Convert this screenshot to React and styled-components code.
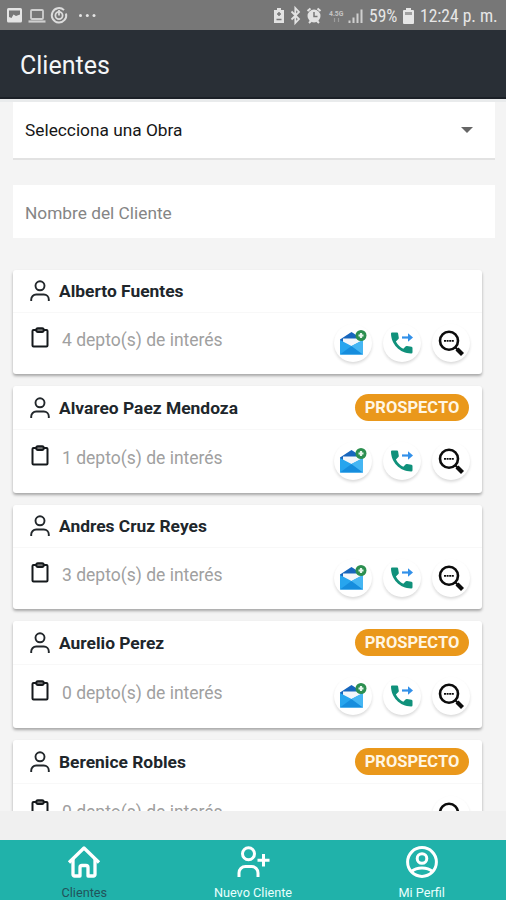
// src/App.jsx
import React, { useState } from "react";
import styled, { createGlobalStyle } from "styled-components";

const clients = [
  { name: "Alberto Fuentes", interests: 4, prospect: false },
  { name: "Alvareo Paez Mendoza", interests: 1, prospect: true },
  { name: "Andres Cruz Reyes", interests: 3, prospect: false },
  { name: "Aurelio Perez", interests: 0, prospect: true },
  { name: "Berenice Robles", interests: 0, prospect: true, onlyDetail: true },
];

const StatusIcons = () => (
  <svg width="100" height="30" viewBox="0 0 100 30" fill="none">
    <rect x="7" y="8" width="15" height="14.500" rx="1.500" fill="#e4e4e4" />
    <path d="M9 10.500h11v4l-4 1.500 -2.500 -1.500 -2 3.500 -2.500 -1z" fill="#777" />
    <rect x="31" y="10" width="12" height="9" rx="1" stroke="#cfcfcf" strokeWidth="1.800" />
    <path d="M28.500 21.500h17" stroke="#cfcfcf" strokeWidth="2.200" />
    <path d="M66 13.500a7.200 7.200 0 1 1-2-3.400" stroke="#dcdcdc" strokeWidth="2" />
    <circle cx="59" cy="15.500" r="3.600" stroke="#dcdcdc" strokeWidth="1.800" />
    <path d="M59 10v5.500" stroke="#dcdcdc" strokeWidth="1.800" />
    <g fill="#e4e4e4">
      <circle cx="80.500" cy="15.500" r="1.500" />
      <circle cx="87.300" cy="15.500" r="1.500" />
      <circle cx="94" cy="15.500" r="1.500" />
    </g>
  </svg>
);

const SignalIcons = () => (
  <svg width="94" height="30" viewBox="272 0 94 30" fill="none">
    <path d="M277 8h4v2h3v13h-10V10h3z" fill="#e2e2e2" />
    <path d="M279 12v4M277 14h4M276.500 19.500h5" stroke="#777" strokeWidth="1.500" />
    <path d="M291.500 11.500l7.500 7.500 -3.700 4V8l3.700 4 -7.500 7.500" stroke="#e2e2e2" strokeWidth="1.800" />
    <circle cx="314" cy="16" r="6.500" fill="#e2e2e2" />
    <path d="M307.500 11l3-2.500M320.500 11l-3-2.500M309 23l2-2M319 23l-2-2" stroke="#e2e2e2" strokeWidth="2" />
    <path d="M314 12v4.500h3.500" stroke="#777" strokeWidth="1.500" />
    <text x="329" y="15.500" fontSize="6.800" fontWeight="700" fill="#c4c4c4" fontFamily="Roboto, sans-serif">4.5G</text>
    <path d="M334.500 18v4M338.500 22v-4" stroke="#9d9d9d" strokeWidth="1.200" />
    <path d="M349.500 20.500v2.500M353.500 17.500v5.500M357.500 13.500v9.500M361.500 9.500v13.500" stroke="#cfcfcf" strokeWidth="2" />
  </svg>
);

const BatteryIcon = () => (
  <svg width="11" height="16" viewBox="0 0 11 16">
    <path d="M3 0h5v2h2a1 1 0 0 1 1 1v12a1 1 0 0 1-1 1H1a1 1 0 0 1-1-1V3a1 1 0 0 1 1-1h2z" fill="#e6e6e6" />
    <path d="M2 4h7v3H2z" fill="#a0a0a0" />
  </svg>
);

const UserIcon = () => (
  <svg width="20" height="22" viewBox="0 0 20 22" fill="none" stroke="#22272b" strokeWidth="1.900">
    <circle cx="10" cy="5.800" r="4.500" />
    <path d="M1.200 21v-1.500a5 5 0 0 1 5-5h7.600a5 5 0 0 1 5 5V21" />
  </svg>
);

const ClipboardIcon = () => (
  <svg width="18" height="21" viewBox="0 0 18 21" fill="none" stroke="#15191c" strokeWidth="2">
    <rect x="1.500" y="3" width="15" height="16.500" rx="1" />
    <path d="M5.300 2.800v.600a1.500 1.500 0 0 0 1.500 1.500h4.400a1.500 1.500 0 0 0 1.500-1.500V2.800a1.500 1.500 0 0 0-1.500-1.500H6.800a1.500 1.500 0 0 0-1.500 1.500z" fill="#777" />
  </svg>
);

const MailIcon = () => (
  <svg width="28" height="26" viewBox="0 0 28 26">
    <path d="M1 9.500L12.500 2 24 9.500V15H1z" fill="#1766bd" />
    <path d="M4 8.500h18v8l-9.500 3L4 16z" fill="#f3f6fa" />
    <path d="M1 10l11.500 6L24 10v14.500H1z" fill="#27a5ee" />
    <path d="M1 24.500l11.500-8.500L24 24.500z" fill="#168ddd" />
    <path d="M24 10v14.500L12.500 16z" fill="#45b6f3" />
    <circle cx="22" cy="5.500" r="5.500" fill="#2c8f50" />
    <path d="M22 3v5M19.500 5.500h5" stroke="#e6f5eb" strokeWidth="2.200" />
  </svg>
);

const CallIcon = () => (
  <svg width="24" height="24" viewBox="0 0 24 24">
    <path
      d="M2 1.500h5q1 0 1.100 1l.7 4.300q.1.700-.4 1.200L5.900 10.500q2.600 5 7.400 7.300l2.500-2.500q.5-.5 1.200-.4l4.500.8q1 .2 1 1.200v4.300q0 1.300-1.300 1.300C9.500 22.500 1.100 13 1 2.600Q1 1.500 2 1.500z"
      fill="#10917b"
    />
    <path d="M12 6.500h8" stroke="#3290e9" strokeWidth="2.200" />
    <path d="M18 2.200l5 4.300-5 4.300z" fill="#3290e9" />
  </svg>
);

const DetailIcon = () => (
  <svg width="26" height="26" viewBox="0 0 26 26" fill="none" stroke="#0c0c0c">
    <circle cx="11" cy="10.800" r="9" strokeWidth="2.600" />
    <path d="M6 10.800h10" strokeWidth="1.800" strokeDasharray="2 .6" />
    <path d="M17.500 17.500l2 2" strokeWidth="2" />
    <path d="M19 19l5.500 5.500" strokeWidth="4.200" />
  </svg>
);

const HomeIcon = () => (
  <svg width="34" height="34" viewBox="0 0 34 34" fill="none" stroke="#fff" strokeWidth="3.300" strokeLinejoin="round">
    <path d="M2 17.500L17 3l15 14.500" />
    <path d="M6 14v15.500a1.500 1.500 0 0 0 1.500 1.500H13v-8.500a2 2 0 0 1 2-2h4a2 2 0 0 1 2 2V31h5.500a1.500 1.500 0 0 0 1.500-1.500V14" />
  </svg>
);

const AddUserIcon = () => (
  <svg width="34" height="34" viewBox="0 0 34 34" fill="none" stroke="#fff" strokeWidth="3">
    <circle cx="12.500" cy="8.800" r="6" />
    <path d="M3 32v-4a6.500 6.500 0 0 1 6.500-6.500h6a6.500 6.500 0 0 1 6.500 6.500v4M27.500 9v12.500M21.500 15.300h12" />
  </svg>
);

const ProfileIcon = () => (
  <svg width="34" height="34" viewBox="0 0 34 34" fill="none" stroke="#fff" strokeWidth="3">
    <circle cx="17" cy="17" r="14.400" />
    <circle cx="17" cy="13.500" r="4.800" />
    <path d="M6.500 26.500q4-3.500 10.500-3.500t10.500 3.500" />
  </svg>
);

const tabs = [
  { label: "Clientes", icon: <HomeIcon /> },
  { label: "Nuevo Cliente", icon: <AddUserIcon /> },
  { label: "Mi Perfil", icon: <ProfileIcon /> },
];

const ClientCard = ({ client }) => (
  <Card>
    <CardHeader $tall={client.prospect}>
      <IconSlot>
        <UserIcon />
      </IconSlot>
      <ClientName>{client.name}</ClientName>
      {client.prospect && <Badge>PROSPECTO</Badge>}
    </CardHeader>
    <CardBody $tall={client.prospect}>
      <IconSlot>
        <ClipboardIcon />
      </IconSlot>
      <Interest>{client.interests} depto(s) de interés</Interest>
      <Actions>
        {!client.onlyDetail && (
          <>
            <RoundButton>
              <MailIcon />
            </RoundButton>
            <RoundButton>
              <CallIcon />
            </RoundButton>
          </>
        )}
        <RoundButton>
          <DetailIcon />
        </RoundButton>
      </Actions>
    </CardBody>
  </Card>
);

const App = () => {
  const [activeTab, setActiveTab] = useState("Clientes");
  const [search, setSearch] = useState("");

  return (
    <Screen>
      <GlobalStyle />
      <StatusBar>
        <StatusIcons />
        <StatusRight>
          <SignalIcons />
          <StatusText $width={29}>59%</StatusText>
          <BatteryIcon />
          <StatusText $width={79}>12:24 p. m.</StatusText>
        </StatusRight>
      </StatusBar>
      <Header>Clientes</Header>
      <Filters>
        <Select>
          Selecciona una Obra
          <Caret />
        </Select>
        <SearchInput
          placeholder="Nombre del Cliente"
          value={search}
          onChange={(e) => setSearch(e.target.value)}
        />
      </Filters>
      <List>
        {clients.map((client) => (
          <ClientCard key={client.name} client={client} />
        ))}
      </List>
      <TabBar>
        {tabs.map((tab) => (
          <Tab
            key={tab.label}
            $active={activeTab === tab.label}
            onClick={() => setActiveTab(tab.label)}
          >
            {tab.icon}
            <span>{tab.label}</span>
          </Tab>
        ))}
      </TabBar>
    </Screen>
  );
};

export default App;

// -------------------- Styles --------------------
const GlobalStyle = createGlobalStyle`
  * {
    box-sizing: border-box;
  }

  body {
    margin: 0;
    font-family: Roboto, sans-serif;
  }

  svg {
    display: block;
    flex-shrink: 0;
  }
`;

const Screen = styled.div`
  display: flex;
  flex-direction: column;
  height: 900px;
  overflow: hidden;
  background: #f0f0f0;
`;

const StatusBar = styled.div`
  display: flex;
  justify-content: space-between;
  height: 30px;
  flex-shrink: 0;
  background: #777;
`;

const StatusRight = styled.div`
  display: flex;
  align-items: center;
  padding: 2px 7px 0 0;

  svg:first-child {
    margin-top: -2px;
  }
`;

const StatusText = styled.span`
  width: ${({ $width }) => $width}px;
  margin: 0 5px 0 3px;
  color: #e6e6e6;
  font-family: "Roboto Condensed", Roboto, sans-serif;
  font-size: 17.500px;
  white-space: nowrap;

  &:last-child {
    margin: 0 0 0 6px;
  }
`;

const Header = styled.header`
  display: flex;
  align-items: center;
  height: 69px;
  flex-shrink: 0;
  padding: 4px 20px 0;
  background: #292f36;
  border-bottom: 2px solid #1b2027;
  color: #f4f6f8;
  font-size: 25px;
`;

const Filters = styled.div`
  padding: 0 11px 0 13px;
  border-top: 3px solid #e9ebec;
  background: #f4f4f4;
`;

const Select = styled.div`
  display: flex;
  align-items: center;
  justify-content: space-between;
  height: 58px;
  padding: 0 22px 0 12px;
  background: #fff;
  border-bottom: 2px solid #e2e2e2;
  color: #161616;
  font-size: 17.3px;
`;

const Caret = styled.span`
  border: 6px solid transparent;
  border-top-color: #666;
  border-bottom: none;
`;

const SearchInput = styled.input`
  display: block;
  width: 100%;
  height: 53px;
  margin-top: 25px;
  padding: 2px 12px 0;
  border: none;
  outline: none;
  background: #fff;
  color: #333;
  font-family: inherit;
  font-size: 17.300px;

  &::placeholder {
    color: #858585;
  }
`;

const List = styled.main`
  display: flex;
  flex-direction: column;
  gap: 12px;
  height: 573px;
  flex-shrink: 0;
  padding: 32px 24px 0 13px;
  overflow: hidden;
  background: #f4f4f4;
`;

const Card = styled.article`
  flex-shrink: 0;
  border-radius: 3px;
  background: #fff;
  box-shadow: 0 2px 3px rgba(0, 0, 0, 0.32);
`;

const CardHeader = styled.div`
  display: flex;
  align-items: center;
  height: ${({ $tall }) => ($tall ? 44 : 43)}px;
  padding: 0 13px 0 17px;
  border-bottom: 1px solid #f8f8f8;
`;

const IconSlot = styled.div`
  display: flex;
  justify-content: center;
  width: 20px;
  flex-shrink: 0;
`;

const ClientName = styled.h2`
  flex: 1;
  margin: 0 0 0 9px;
  color: #20262b;
  font-size: 17.400px;
  font-weight: 700;
`;

const Badge = styled.span`
  width: 114px;
  height: 27px;
  border-radius: 14px;
  background: #ea981b;
  color: #fff6e4;
  font-size: 16.500px;
  font-weight: 700;
  line-height: 28px;
  text-align: center;
`;

const CardBody = styled.div`
  display: flex;
  height: ${({ $tall }) => ($tall ? 63 : 61)}px;
  padding: ${({ $tall }) => ($tall ? 15 : 14)}px 12px 0 17px;
`;

const Interest = styled.p`
  flex: 1;
  margin: 2px 0 0 12px;
  color: #a0a0a0;
  font-size: 17.500px;
  line-height: 22px;
`;

const Actions = styled.div`
  display: flex;
  gap: 11px;
  margin-top: -3px;
`;

const RoundButton = styled.button`
  display: flex;
  align-items: center;
  justify-content: center;
  width: 38px;
  height: 38px;
  padding: 0;
  border: none;
  border-radius: 50%;
  background: #fff;
  box-shadow: 0 2px 3px rgba(0, 0, 0, 0.14);
`;

const TabBar = styled.nav`
  display: flex;
  height: 60px;
  flex-shrink: 0;
  margin-top: auto;
  background: #20b2aa;
`;

const Tab = styled.button`
  display: flex;
  flex: 1;
  flex-direction: column;
  align-items: center;
  padding: 5px 0 0;
  border: none;
  background: transparent;
  color: ${({ $active }) => ($active ? "#21545b" : "#e9fffd")};
  font-family: inherit;
  font-size: 12.700px;

  span {
    margin-top: 6px;
  }
`;
